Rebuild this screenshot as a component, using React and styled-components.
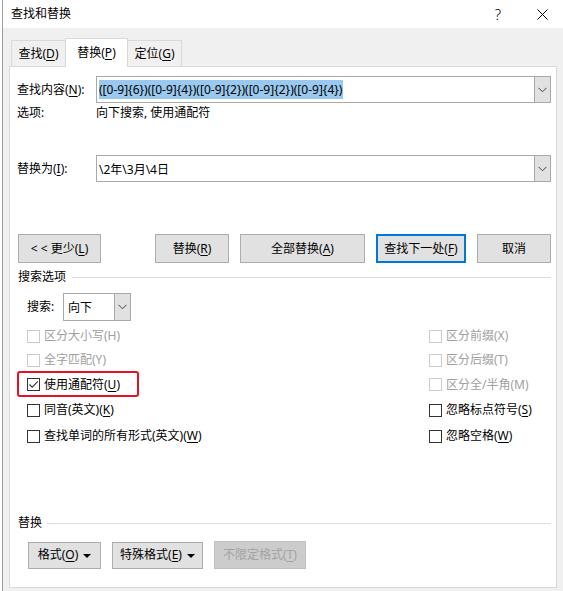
import React from "react";
import styled, { createGlobalStyle } from "styled-components";

const GlobalStyle = createGlobalStyle`
  html, body {
    margin: 0;
    padding: 0;
    background: #fff;
  }
  body {
    font-family: "Noto Sans", "Noto Sans CJK SC", "Microsoft YaHei", sans-serif;
    font-size: 12px;
    color: #000;
  }
  #root {
    width: 563px;
    height: 591px;
    overflow: hidden;
  }
  u {
    text-underline-offset: 2px;
  }
`;

const Window = styled.div`
  margin-left: 2px;
  width: 561px;
  height: 591px;
  border-left: 1px solid #a0a0a0;
  box-sizing: border-box;
  display: flex;
  flex-direction: column;
`;

const TitleBar = styled.div`
  height: 28px;
  flex: none;
  background: #fff;
  display: flex;
  align-items: center;
  padding-left: 8px;
`;

const Title = styled.div`
  flex: 1;
  font-size: 12px;
  line-height: 16px;
`;

const CaptionBtn = styled.div`
  width: ${(p) => p.w}px;
  height: 28px;
  display: flex;
  align-items: center;
  justify-content: center;
  font-size: 15px;
  font-weight: 300;
`;

const Body = styled.div`
  flex: 1;
  background: #f0f0f0;
  padding: 10px 6px 3px 6px;
  display: flex;
  flex-direction: column;
`;

const Tabs = styled.div`
  display: flex;
  align-items: flex-end;
  height: 29px;
  margin: 0 0 -1px 2px;
  position: relative;
  z-index: 1;
`;

const Tab = styled.div`
  box-sizing: border-box;
  width: ${(p) => p.w}px;
  height: ${(p) => (p.active ? 29 : 26)}px;
  margin-bottom: ${(p) => (p.active ? 0 : 1)}px;
  margin-left: ${(p) => (p.active ? -1 : 0)}px;
  margin-right: ${(p) => (p.active ? -1 : 0)}px;
  background: ${(p) => (p.active ? "#fff" : "#f0f0f0")};
  border: 1px solid #d9d9d9;
  border-bottom: none;
  display: flex;
  align-items: center;
  justify-content: center;
  line-height: 16px;
  position: relative;
  z-index: ${(p) => (p.active ? 2 : 0)};
`;

const Panel = styled.div`
  flex: 1;
  background: #fff;
  border: 1px solid #d9d9d9;
  display: flex;
  flex-direction: column;
  padding: 9px 5px 18px 7px;
`;

const FieldRow = styled.div`
  display: flex;
  align-items: center;
  height: 27px;
  margin-top: ${(p) => p.mt || 0}px;
`;

const FieldLabel = styled.div`
  width: 79px;
  flex: none;
  line-height: 16px;
`;

const Combo = styled.div`
  flex: 1;
  height: 27px;
  box-sizing: border-box;
  border: 1px solid #a9a9a9;
  display: flex;
  align-items: stretch;
`;

const ComboValue = styled.div`
  flex: 1;
  display: flex;
  align-items: center;
  padding-left: 2px;
  font-size: 12px;
`;

const Selected = styled.span`
  background: #99c9ef;
  line-height: 19px;
  display: inline-block;
  padding-right: 1px;
`;

const DropBtn = styled.div`
  width: 15px;
  flex: none;
  background: #e1e1e1;
  border-left: 1px solid #a9a9a9;
  display: flex;
  align-items: center;
  justify-content: center;
`;

const InfoRow = styled.div`
  display: flex;
  align-items: center;
  height: 18px;
  margin-top: 1px;
  line-height: 16px;
`;

const ButtonRow = styled.div`
  display: flex;
  align-items: center;
  gap: 11px;
  height: 29px;
  margin: 52px 0 0 1px;
`;

const Button = styled.div`
  box-sizing: border-box;
  width: ${(p) => p.w}px;
  height: ${(p) => p.h || 29}px;
  background: ${(p) => (p.disabled ? "#cccccc" : "#e1e1e1")};
  border: ${(p) =>
    p.primary ? "2px solid #0078d7" : p.disabled ? "1px solid #bfbfbf" : "1px solid #adadad"};
  color: ${(p) => (p.disabled ? "#a3a3a3" : "#000")};
  display: flex;
  align-items: center;
  justify-content: center;
  line-height: 16px;
  margin-right: ${(p) => (p.push ? "auto" : "0")};
  flex: none;
  white-space: nowrap;
`;

const Caret = styled.span`
  width: 0;
  height: 0;
  border-left: 4px solid transparent;
  border-right: 4px solid transparent;
  border-top: 4px solid #000;
  margin-left: 5px;
  margin-top: 1px;
`;

const GroupHeader = styled.div`
  display: flex;
  align-items: center;
  height: 16px;
  margin: ${(p) => p.m};
  line-height: 16px;
  &::after {
    content: "";
    flex: 1;
    height: 1px;
    background: #dcdcdc;
    margin-left: ${(p) => p.gap}px;
  }
`;

const SearchRow = styled.div`
  display: flex;
  align-items: center;
  height: 28px;
  margin-top: 8px;
  padding-left: 10px;
`;

const SearchLabel = styled.div`
  width: 36px;
  line-height: 16px;
`;

const Select = styled.div`
  width: 68px;
  height: 28px;
  box-sizing: border-box;
  border: 1px solid #a9a9a9;
  display: flex;
`;

const SelectValue = styled.div`
  flex: 1;
  display: flex;
  align-items: center;
  padding-left: 4px;
`;

const Options = styled.div`
  display: grid;
  grid-template-columns: 402px 1fr;
  grid-template-rows: 24px 24px 25px 26px 26px;
  grid-auto-flow: column;
  margin-top: 3px;
  padding-left: 10px;
`;

const Check = styled.div`
  display: flex;
  align-items: center;
  position: relative;
  color: ${(p) => (p.disabled ? "#a0a0a0" : "#000")};
  line-height: 16px;
  white-space: nowrap;
`;

const Box = styled.span`
  width: 13px;
  height: 13px;
  box-sizing: border-box;
  border: 1px solid ${(p) => (p.disabled ? "#cccccc" : "#333333")};
  background: #fff;
  margin-right: 4px;
  display: flex;
  align-items: center;
  justify-content: center;
  flex: none;
`;

const Highlight = styled.div`
  position: absolute;
  left: -10px;
  top: -1px;
  width: 122px;
  height: 26px;
  box-sizing: border-box;
  border: 2px solid #e81123;
  border-radius: 3px;
`;

const BottomRow = styled.div`
  display: flex;
  align-items: center;
  gap: 11px;
  margin: 10px 0 0 11px;
`;

const Chevron = () => (
  <svg width="9" height="6" viewBox="0 0 9 6">
    <path d="M0.5 0.8 L4.5 4.8 L8.5 0.8" fill="none" stroke="#444" strokeWidth="1" />
  </svg>
);

const CheckItem = ({ label, checked, disabled, marked }) => (
  <Check disabled={disabled}>
    {marked && <Highlight />}
    <Box disabled={disabled}>
      {checked && (
        <svg width="11" height="11" viewBox="0 0 11 11">
          <path d="M1.5 5.5 L4.2 8.2 L9.8 2.4" fill="none" stroke="#333" strokeWidth="1.1" />
        </svg>
      )}
    </Box>
    {label}
  </Check>
);

export default function App() {
  return (
    <>
      <GlobalStyle />
      <Window>
        <TitleBar>
          <Title>查找和替换</Title>
          <CaptionBtn w={46}>?</CaptionBtn>
          <CaptionBtn w={42}>
            <svg width="11" height="11" viewBox="0 0 11 11">
              <path d="M0.5 0.5 L10.5 10.5 M10.5 0.5 L0.5 10.5" stroke="#000" strokeWidth="1" />
            </svg>
          </CaptionBtn>
        </TitleBar>
        <Body>
          <Tabs>
            <Tab w={55}>
              查找(<u>D</u>)
            </Tab>
            <Tab w={63} active>
              替换(<u>P</u>)
            </Tab>
            <Tab w={55}>
              定位(<u>G</u>)
            </Tab>
          </Tabs>
          <Panel>
            <FieldRow>
              <FieldLabel>
                查找内容(<u>N</u>):
              </FieldLabel>
              <Combo>
                <ComboValue>
                  <Selected>([0-9]{"{6}"})([0-9]{"{4}"})([0-9]{"{2}"})([0-9]{"{2}"})([0-9]{"{4}"})</Selected>
                </ComboValue>
                <DropBtn>
                  <Chevron />
                </DropBtn>
              </Combo>
            </FieldRow>
            <InfoRow>
              <FieldLabel>选项:</FieldLabel>
              <span>向下搜索, 使用通配符</span>
            </InfoRow>
            <FieldRow mt={33}>
              <FieldLabel>
                替换为(<u>I</u>):
              </FieldLabel>
              <Combo>
                <ComboValue>\2年\3月\4日</ComboValue>
                <DropBtn>
                  <Chevron />
                </DropBtn>
              </Combo>
            </FieldRow>
            <ButtonRow>
              <Button w={83} push>
                &lt; &lt; 更少(<u>L</u>)
              </Button>
              <Button w={74}>
                替换(<u>R</u>)
              </Button>
              <Button w={125}>
                全部替换(<u>A</u>)
              </Button>
              <Button w={90} primary>
                查找下一处(<u>F</u>)
              </Button>
              <Button w={74}>取消</Button>
            </ButtonRow>
            <GroupHeader m="6px 0 0 1px" gap={6}>
              搜索选项
            </GroupHeader>
            <SearchRow>
              <SearchLabel>搜索:</SearchLabel>
              <Select>
                <SelectValue>向下</SelectValue>
                <DropBtn>
                  <Chevron />
                </DropBtn>
              </Select>
            </SearchRow>
            <Options>
              <CheckItem disabled label="区分大小写(H)" />
              <CheckItem disabled label="全字匹配(Y)" />
              <CheckItem checked marked label={<span>使用通配符(<u>U</u>)</span>} />
              <CheckItem label={<span>同音(英文)(<u>K</u>)</span>} />
              <CheckItem label={<span>查找单词的所有形式(英文)(<u>W</u>)</span>} />
              <CheckItem disabled label="区分前缀(X)" />
              <CheckItem disabled label="区分后缀(T)" />
              <CheckItem disabled label="区分全/半角(M)" />
              <CheckItem label={<span>忽略标点符号(<u>S</u>)</span>} />
              <CheckItem label={<span>忽略空格(<u>W</u>)</span>} />
            </Options>
            <GroupHeader m="auto 0 0 1px" gap={5}>
              替换
            </GroupHeader>
            <BottomRow>
              <Button w={73} h={27}>
                格式(<u>O</u>)
                <Caret />
              </Button>
              <Button w={91} h={27}>
                特殊格式(<u>E</u>)
                <Caret />
              </Button>
              <Button w={92} h={28} disabled>
                不限定格式(<u>T</u>)
              </Button>
            </BottomRow>
          </Panel>
        </Body>
      </Window>
    </>
  );
}
